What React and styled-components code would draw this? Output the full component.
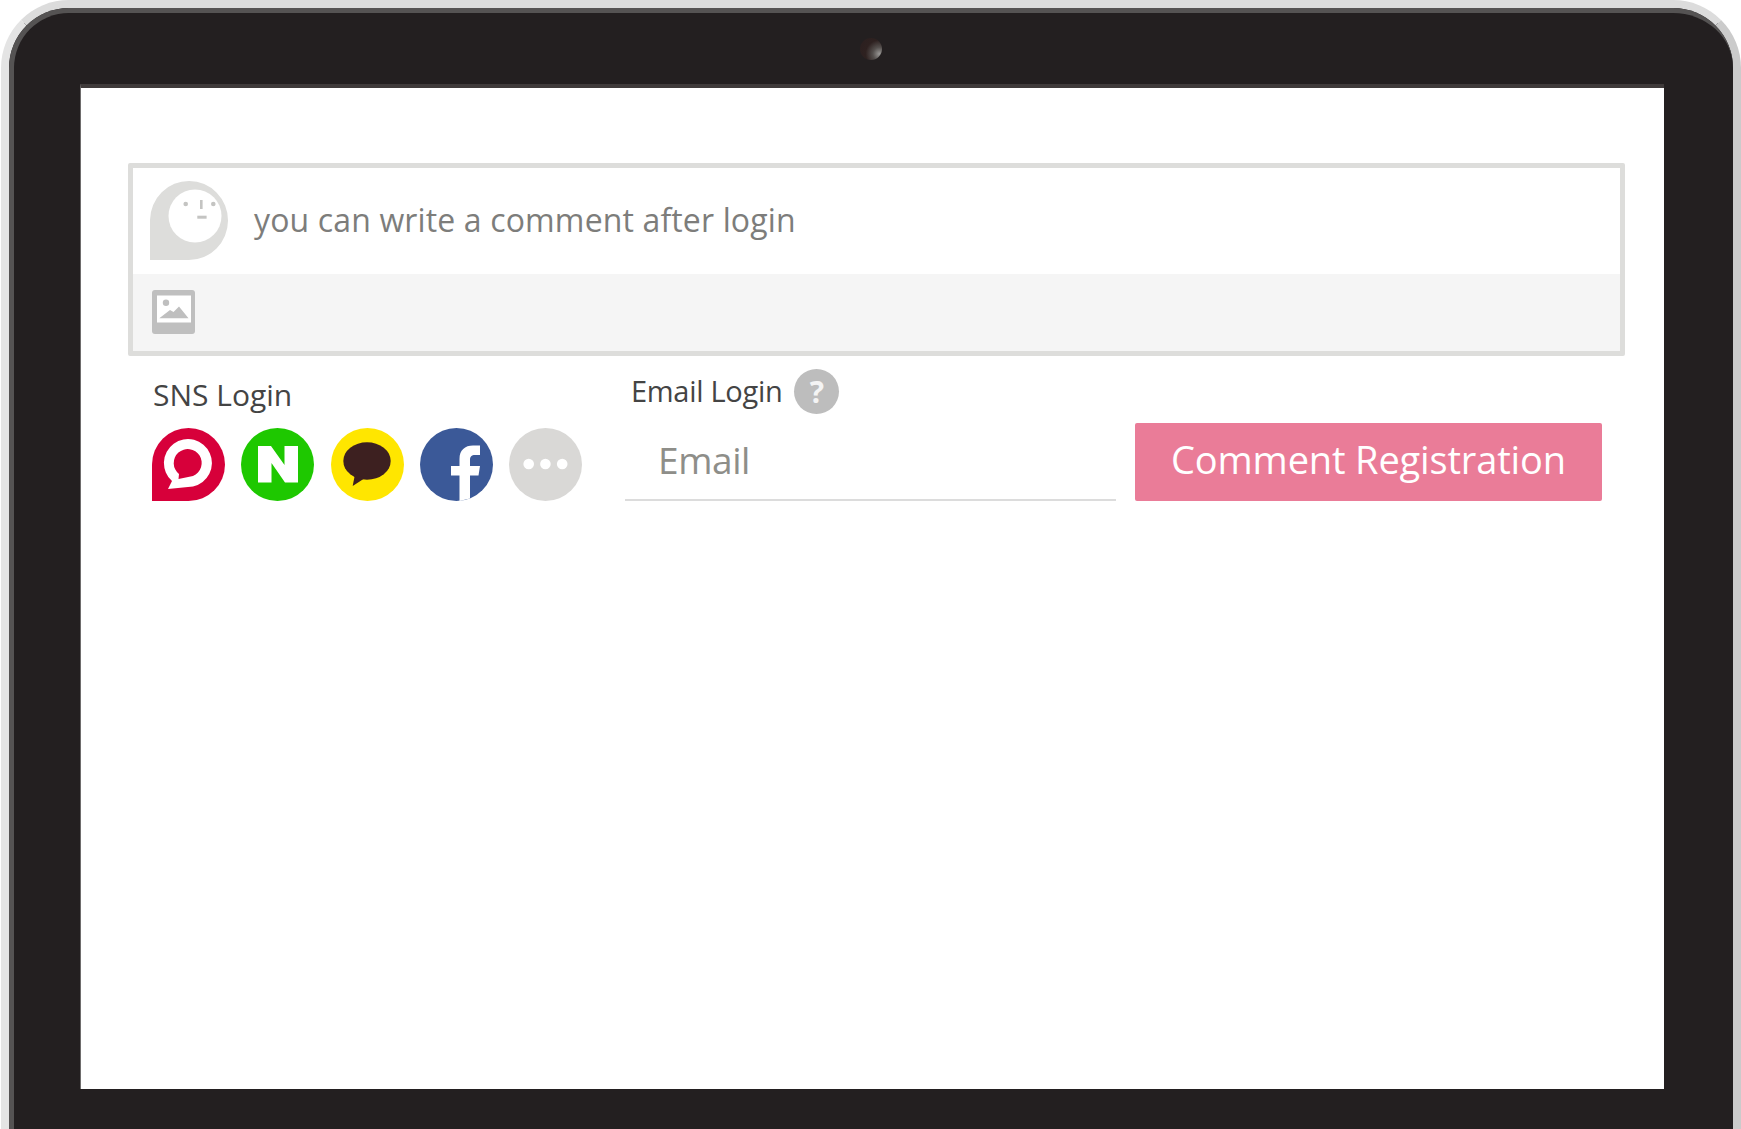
import React from "react";
import styled, { createGlobalStyle } from "styled-components";

const Global = createGlobalStyle`
  html, body { margin: 0; padding: 0; background: #fff; overflow: hidden; }
  * { box-sizing: border-box; }
  body { font-family: "Open Sans", "Noto Sans", sans-serif; }
`;

const Casing = styled.div`
  width: 1741px;
  height: 1129px;
  padding: 0 0 0 1px;
`;
const Silver = styled.div`
  height: 1129px;
  border-style: solid;
  border-width: 8px 8px 0 8px;
  border-color: #dcdcdc #cbcbcb #d6d6d6 #e4e4e4;
  border-radius: 68px 68px 0 0;
  background: #231f20;
`;
const Bezel = styled.div`
  height: 100%;
  border-style: solid;
  border-width: 5px 0 0 5px;
  border-color: #555353;
  border-radius: 60px 60px 0 0;
  background: #231f20;
  display: flex;
  flex-direction: column;
`;
const TopBar = styled.div`
  height: 71px;
  display: flex;
  justify-content: center;
  padding: 25px 6px 0 0;
`;
const Camera = styled.div`
  width: 22px;
  height: 22px;
  border-radius: 50%;
  background: radial-gradient(circle at 88% 72%, #9a9896 0%, #55504e 26%, #2e2120 55%, #2a1f1f 100%);
`;
const Screen = styled.div`
  margin: 0 69px 0 66px;
  height: 1005px;
  background: #fff;
  border-top: 4px solid #3f3a3a;
  border-left: 1px solid #6e6c6c;
  padding: 75px 39px 0 47px;
`;
const CommentBox = styled.div`
  height: 193px;
  border: 5px solid #dddddb;
  border-radius: 2px;
  display: flex;
  flex-direction: column;
`;
const Compose = styled.div`
  height: 106px;
  display: flex;
  align-items: flex-start;
  padding: 13px 0 0 17px;
  background: #fff;
`;
const Prompt = styled.div`
  margin: 17px 0 0 26px;
  font-size: 32px;
  line-height: 44px;
  letter-spacing: 0.14px;
  color: #7d7d7b;
`;
const Tools = styled.div`
  flex: 1;
  background: #f5f5f5;
  padding: 16px 0 0 19px;
`;
const LoginRow = styled.div`
  display: flex;
  align-items: flex-start;
  padding: 0 0 0 24px;
`;
const SnsColumn = styled.div`
  width: 473px;
  display: flex;
  flex-direction: column;
`;
const SnsLabel = styled.div`
  margin: 19px 0 0 1px;
  font-size: 30px;
  line-height: 40px;
  color: #444444;
`;
const EmailLabel = styled.div`
  padding-bottom: 2px;
  font-size: 29px;
  line-height: 40px;
  letter-spacing: -0.3px;
  color: #444444;
`;
const IconRow = styled.div`
  display: flex;
  gap: 16.3px;
  margin-top: 13px;
`;
const EmailColumn = styled.div`
  width: 491px;
  margin-top: 13px;
  display: flex;
  flex-direction: column;
`;
const EmailHead = styled.div`
  display: flex;
  align-items: center;
  gap: 12px;
  padding-left: 6px;
`;
const Help = styled.div`
  width: 45px;
  height: 45px;
  border-radius: 50%;
  background: #bdbdbd;
  color: #f4f4f4;
  font-size: 30px;
  font-weight: 700;
  line-height: 45px;
  text-align: center;
`;
const EmailField = styled.div`
  height: 88px;
  margin-top: -1px;
  border-bottom: 2px solid #dcdcdc;
  padding: 22px 0 0 33px;
  font-size: 37px;
  line-height: 50px;
  letter-spacing: -0.4px;
  color: #8e8e89;
`;
const Submit = styled.button`
  width: 467px;
  height: 78px;
  margin: 67px 0 0 19px;
  border: 0;
  border-radius: 2px;
  padding: 0 0 6px;
  background: #ea7c98;
  color: #fff;
  font-family: inherit;
  font-size: 38px;
  letter-spacing: -0.15px;
  text-align: center;
`;

const Avatar = () => (
  <svg width="78" height="79" viewBox="0 0 78 79" aria-hidden="true">
    <path d="M0 79V39A39 39.5 0 1 1 39 79Z" fill="#dddddb" />
    <circle cx="45" cy="35" r="26.5" fill="#fff" />
    <circle cx="35.7" cy="23" r="2.3" fill="#c4c4c2" />
    <circle cx="63.3" cy="23" r="2.3" fill="#c4c4c2" />
    <rect x="50" y="19" width="2.6" height="9" fill="#c4c4c2" />
    <rect x="47.3" y="34.7" width="9.3" height="3" fill="#c4c4c2" />
  </svg>
);

const ImageIcon = () => (
  <svg width="43" height="44" viewBox="0 0 43 44" aria-hidden="true">
    <rect width="43" height="44" rx="3" fill="#bfbfbf" />
    <rect x="5" y="5.5" width="34" height="27" fill="#fff" />
    <circle cx="14" cy="12.7" r="3.2" fill="#bfbfbf" />
    <path d="M7.3 28.3L18 20L21.5 22L27 16.5L36.5 28.3Z" fill="#bfbfbf" />
  </svg>
);

const Round = ({ children }) => (
  <svg width="73" height="73" viewBox="0 0 73 73" aria-hidden="true">
    {children}
  </svg>
);

const Bubble = () => (
  <Round>
    <path d="M0 73V36.5A36.5 36.5 0 1 1 36.5 73Z" fill="#d7003a" />
    <path d="M16 61L20 53A24 24 0 1 1 41 58.5Z" fill="#fff" />
    <path d="M26.5 51L27 46A14 14 0 1 1 41 48Z" fill="#d7003a" />
  </Round>
);
const Naver = () => (
  <Round>
    <circle cx="36.5" cy="36.5" r="36.5" fill="#1ec800" />
    <path d="M17 18H30L43.5 37V18H57V54.5H44L30.5 35V54.5H17Z" fill="#fff" />
  </Round>
);
const Kakao = () => (
  <Round>
    <circle cx="36.5" cy="36.5" r="36.5" fill="#ffe600" />
    <ellipse cx="36" cy="33" rx="23.7" ry="18.7" fill="#3d2020" />
    <path d="M24 46L21.7 58L34 50Z" fill="#3d2020" />
  </Round>
);
const Facebook = () => (
  <Round>
    <circle cx="36.5" cy="36.5" r="36.5" fill="#3b5998" />
    <path
      d="M39.5 72.9V47.5H31V38H39.5V31C39.5 22 45 17.5 53 17.5H60V27H55C51.5 27 50 28.5 50 32V38H60L58.5 47.5H50V70.4Z"
      fill="#fff"
    />
  </Round>
);
const More = () => (
  <Round>
    <circle cx="36.5" cy="36.5" r="36.5" fill="#d9d8d6" />
    <circle cx="19.7" cy="36" r="5.3" fill="#fff" />
    <circle cx="36.4" cy="36" r="5.3" fill="#fff" />
    <circle cx="53.2" cy="36" r="5.3" fill="#fff" />
  </Round>
);

export default function App() {
  return (
    <Casing>
      <Global />
      <Silver>
        <Bezel>
          <TopBar>
            <Camera />
          </TopBar>
          <Screen>
            <CommentBox>
              <Compose>
                <Avatar />
                <Prompt>you can write a comment after login</Prompt>
              </Compose>
              <Tools>
                <ImageIcon />
              </Tools>
            </CommentBox>
            <LoginRow>
              <SnsColumn>
                <SnsLabel>SNS Login</SnsLabel>
                <IconRow>
                  <Bubble />
                  <Naver />
                  <Kakao />
                  <Facebook />
                  <More />
                </IconRow>
              </SnsColumn>
              <EmailColumn>
                <EmailHead>
                  <EmailLabel>Email Login</EmailLabel>
                  <Help>?</Help>
                </EmailHead>
                <EmailField>Email</EmailField>
              </EmailColumn>
              <Submit>Comment Registration</Submit>
            </LoginRow>
          </Screen>
        </Bezel>
      </Silver>
    </Casing>
  );
}
